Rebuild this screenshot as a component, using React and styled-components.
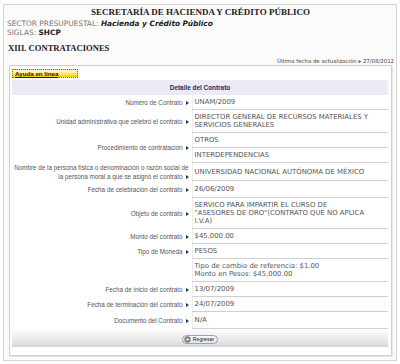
import React from "react";
import styled, { createGlobalStyle } from "styled-components";

const GlobalStyle = createGlobalStyle`
  body {
    margin: 0;
    background: #fff;
    font-family: "DejaVu Sans", Verdana, sans-serif;
  }
`;

const Page = styled.div`
  margin: 4px 3px 0 3px;
  height: 357px;
  box-sizing: border-box;
  border: 1px solid #d4d4d4;
  background: #fbfbfb;
  padding: 1px 4px 0 5px;
  display: flex;
  flex-direction: column;
`;

const Title = styled.h1`
  margin: 0;
  text-align: center;
  font: bold 9px/12px "Liberation Serif", "Times New Roman", serif;
  color: #222;
`;

const InfoLine = styled.div`
  margin-top: ${(p) => p.$top || 0}px;
  font-size: 7.4px;
  line-height: 9px;
  color: #777;
  margin-left: -2px;
  b {
    color: #222;
  }
  em {
    font-weight: bold;
    color: #222;
  }
`;

const Section = styled.h2`
  margin: 6px 0 0 -1px;
  font: bold 8.6px/10px "Liberation Serif", "Times New Roman", serif;
  color: #222;
`;

const Updated = styled.div`
  margin-top: 4px;
  text-align: right;
  font-size: 5.4px;
  line-height: 8px;
  color: #444;
  margin-right: -2px;
`;

const Panel = styled.div`
  flex: 1;
  margin-bottom: 4px;
  border: 1px solid #cfcfcf;
  background: #fff;
  padding: 3px 3px 0 2px;
  box-shadow: 1px 1px 0 #e6e6e6;
`;

const HelpTab = styled.div`
  width: 66px;
  height: 9px;
  box-sizing: border-box;
  border: 1px dotted #666;
  background: linear-gradient(to bottom, #fffbe0, #ffe65c 60%, #f6c800);
  font: bold 6.2px/7px "Liberation Sans", Arial, sans-serif;
  color: #222;
  text-decoration: underline;
  padding-left: 2px;
`;

const Band = styled.div`
  margin-top: 2px;
  height: 15px;
  background: #ebebf3;
  text-align: center;
  font: bold 6.4px/15px "Liberation Sans", Arial, sans-serif;
  color: #1c2b6b;
`;

const Table = styled.table`
  width: 100%;
  border-collapse: collapse;
  table-layout: fixed;
`;

const LabelCol = styled.col`
  width: 180px;
`;

const Label = styled.td`
  text-align: right;
  vertical-align: middle;
  padding: 0 3px 0 0;
  font: 6.3px/9px "Liberation Sans", Arial, sans-serif;
  color: #555;
  white-space: nowrap;
  &::after {
    content: ${(p) => (p.$empty ? "none" : '""')};
    display: inline-block;
    margin-left: 3px;
    border-left: 3px solid #333;
    border-top: 2px solid transparent;
    border-bottom: 2px solid transparent;
    vertical-align: 0;
  }
`;

const Value = styled.td`
  padding: ${(p) => p.$pad ?? 3}px 2px;
  border-bottom: 1px solid #cfcfcf;
  border-left: 1px solid #ececec;
  font-size: 6.9px;
  line-height: 8px;
  color: #555;
  vertical-align: middle;
`;

const Footer = styled.div`
  height: 17px;
  margin-top: 1px;
  background: linear-gradient(to bottom, #fbfbfb, #e9e9e9 60%, #d6d6d6);
  display: flex;
  align-items: center;
  justify-content: center;
`;

const BackButton = styled.button`
  display: flex;
  align-items: center;
  gap: 2px;
  height: 9px;
  padding: 0 3px 0 1px;
  border: 1px solid #9aa4b4;
  border-radius: 5px;
  background: linear-gradient(to bottom, #f6f8fb, #dfe5ee);
  font: 5.2px/7px "Liberation Sans", Arial, sans-serif;
  color: #222;
  margin-top: 1px;
`;

const BackIcon = () => (
  <svg width="7" height="7" viewBox="0 0 8 8">
    <circle cx="4" cy="4" r="3.6" fill="#7d7d7d" />
    <path d="M2 4 L4.2 2.2 V3.3 H6 V4.7 H4.2 V5.8 Z" fill="#fff" />
  </svg>
);

const Row = ({ label, rowSpan, empty, pad, children }) => (
  <tr>
    {label !== undefined && (
      <Label rowSpan={rowSpan} $empty={empty}>
        {label}
      </Label>
    )}
    <Value $pad={pad}>{children}</Value>
  </tr>
);

export default function App() {
  return (
    <>
      <GlobalStyle />
      <Page>
        <Title>SECRETARÍA DE HACIENDA Y CRÉDITO PÚBLICO</Title>
        <InfoLine $top={1}>
          SECTOR PRESUPUESTAL: <em>Hacienda y Crédito Público</em>
        </InfoLine>
        <InfoLine>
          SIGLAS: <b>SHCP</b>
        </InfoLine>
        <Section>XIII. CONTRATACIONES</Section>
        <Updated>Última fecha de actualización ▸ 27/08/2012</Updated>
        <Panel>
          <HelpTab>Ayuda en línea</HelpTab>
          <Band>Detalle del Contrato</Band>
          <Table>
            <colgroup>
              <LabelCol />
              <col />
            </colgroup>
            <tbody>
              <Row label="Número de Contrato">UNAM/2009</Row>
              <Row label="Unidad administrativa que celebró el contrato">
                DIRECTOR GENERAL DE RECURSOS MATERIALES Y
                <br />
                SERVICIOS GENERALES
              </Row>
              <Row label="Procedimiento de contratación" rowSpan={2}>
                OTROS
              </Row>
              <Row>INTERDEPENDENCIAS</Row>
              <Row
                label={
                  <>
                    Nombre de la persona física o denominación o razón social de
                    <br />
                    la persona moral a que se asignó el contrato
                  </>
                }
                pad={1}
              >
                UNIVERSIDAD NACIONAL AUTÓNOMA DE MÉXICO
              </Row>
              <Row label="Fecha de celebración del contrato" pad={4}>
                26/06/2009
              </Row>
              <Row label="Objeto de contrato">
                SERVICO PARA IMPARTIR EL CURSO DE
                <br />
                "ASESORES DE ORO"(CONTRATO QUE NO APLICA
                <br />
                I.V.A)
              </Row>
              <Row label="Monto del contrato">$45,000.00</Row>
              <Row label="Tipo de Moneda">PESOS</Row>
              <Row label="" empty>
                Tipo de cambio de referencia: $1.00
                <br />
                Monto en Pesos: $45,000.00
              </Row>
              <Row label="Fecha de inicio del contrato">13/07/2009</Row>
              <Row label="Fecha de terminación del contrato">24/07/2009</Row>
              <Row label="Documento del Contrato" pad={4}>N/A</Row>
            </tbody>
          </Table>
          <Footer>
            <BackButton type="button">
              <BackIcon />
              Regresar
            </BackButton>
          </Footer>
        </Panel>
      </Page>
    </>
  );
}
